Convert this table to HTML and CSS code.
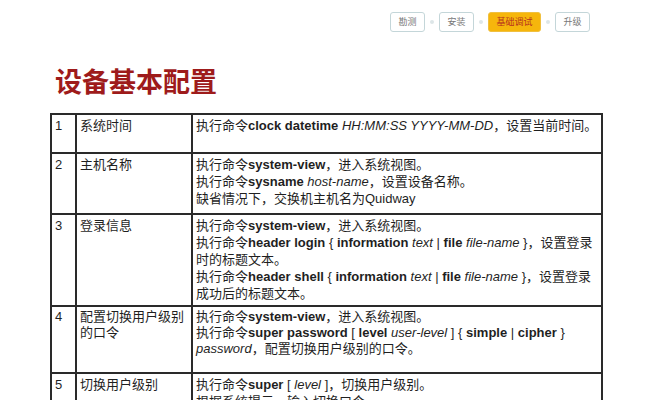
FILE: index.html
```html
<!DOCTYPE html>
<html lang="zh-CN">
<head>
<meta charset="utf-8">
<title>设备基本配置</title>
<link rel="stylesheet" href="styles.css">
</head>
<body>
<div class="page">
  <nav class="steps">
    <span class="step">勘测</span>
    <span class="dot"></span>
    <span class="step">安装</span>
    <span class="dot"></span>
    <span class="step active">基础调试</span>
    <span class="dot"></span>
    <span class="step">升级</span>
  </nav>
  <h1 class="title">设备基本配置</h1>
  <table class="cfg">
    <colgroup><col class="c1"><col class="c2"><col class="c3"></colgroup>
    <tr class="r1">
      <td>1</td><td>系统时间</td>
      <td>执行命令<b>clock datetime</b> <i>HH:MM:SS YYYY-MM-DD</i>，设置当前时间。</td>
    </tr>
    <tr class="r2">
      <td>2</td><td>主机名称</td>
      <td>执行命令<b>system-view</b>，进入系统视图。<br>执行命令<b>sysname</b> <i>host-name</i>，设置设备名称。<br>缺省情况下，交换机主机名为Quidway</td>
    </tr>
    <tr class="r3">
      <td>3</td><td>登录信息</td>
      <td>执行命令<b>system-view</b>，进入系统视图。<br>执行命令<b>header login</b> { <b>information</b> <i>text</i> | <b>file</b> <i>file-name</i> }，设置登录<br>时的标题文本。<br>执行命令<b>header shell</b> { <b>information</b> <i>text</i> | <b>file</b> <i>file-name</i> }，设置登录<br>成功后的标题文本。</td>
    </tr>
    <tr class="r4">
      <td>4</td><td>配置切换用户级别<br>的口令</td>
      <td>执行命令<b>system-view</b>，进入系统视图。<br>执行命令<b>super password</b> [ <b>level</b> <i>user-level</i> ] { <b>simple</b> | <b>cipher</b> }<br><i>password</i>，配置切换用户级别的口令。</td>
    </tr>
    <tr class="r5">
      <td>5</td><td>切换用户级别</td>
      <td>执行命令<b>super</b> [ <i>level</i> ]，切换用户级别。<br>根据系统提示，输入切换口令。</td>
    </tr>
  </table>
</div>
</body>
</html>
```
FILE: styles.css
```css
html, body {
  margin: 0;
  padding: 0;
  background: #fff;
}
.page {
  width: 667px;
  height: 400px;
  overflow: hidden;
}
.steps {
  display: flex;
  align-items: center;
  justify-content: flex-end;
  padding: 12px 77px 0 0;
  gap: 5px;
  height: 20px;
}
.step {
  box-sizing: border-box;
  flex: 0 0 35px;
  width: 35px;
  height: 20px;
  border: 1.5px solid #c4d6d9;
  border-radius: 3px;
  background: #fff;
  color: #777;
  font-family: "Noto Sans CJK SC", sans-serif;
  font-size: 9px;
  line-height: 17px;
  text-align: center;
}
.step.active {
  flex-basis: 53px;
  width: 53px;
  background: #f6b60c;
  border-color: #f0c040;
  color: #b5301e;
}
.dot {
  flex: 0 0 4px;
  width: 4px;
  height: 4px;
  border-radius: 50%;
  background: #dde6e8;
}
.title {
  margin: 31px 0 0 55px;
  font-family: "Noto Sans CJK SC", sans-serif;
  font-weight: 700;
  font-size: 27px;
  line-height: 36px;
  height: 36px;
  color: #9e1b1b;
}
.cfg {
  margin: 14px 0 0 50px;
  width: 551px;
  border-collapse: collapse;
  table-layout: fixed;
  font-family: "Liberation Sans", "Noto Sans CJK SC", sans-serif;
  font-size: 13px;
  line-height: 17px;
  color: #1f1f1f;
}
.c1 { width: 25px; }
.c2 { width: 116px; }
.c3 { width: 410px; }
.cfg td {
  border: 2px solid #2a2a2a;
  vertical-align: top;
  padding: 2px 3px 0 3px;
  white-space: nowrap;
}
.cfg b { font-weight: 700; }
.cfg i { font-style: italic; }
.r1 { height: 39px; }
.r2 { height: 61px; }
.r3 { height: 92px; }
.r4 { height: 67px; line-height: 16px; }
.r5 { height: 60px; }
```
